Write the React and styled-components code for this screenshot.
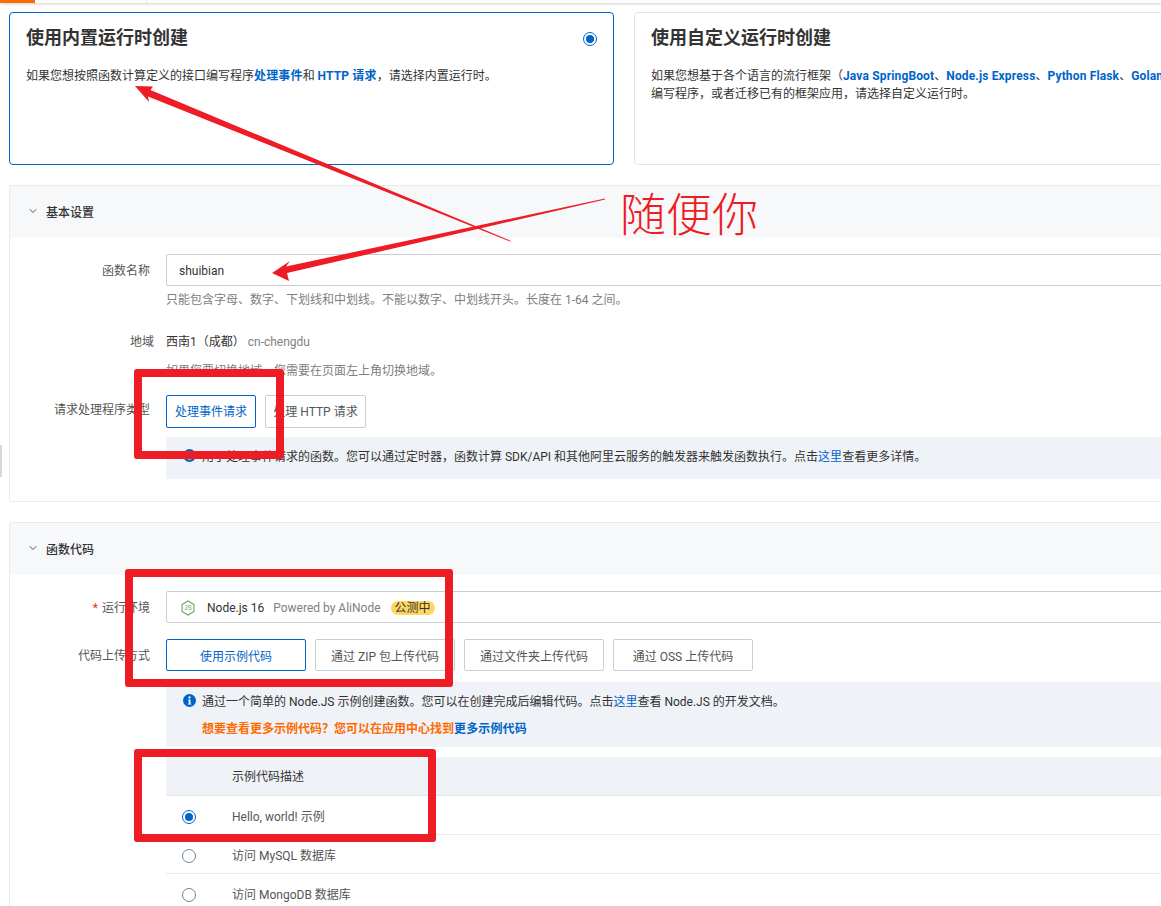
import React from "react";
import styled, { createGlobalStyle, css } from "styled-components";
import { ChevronDown } from "lucide-react";

const GlobalStyle = createGlobalStyle`
  html, body {
    margin: 0;
    padding: 0;
    background: #fff;
    overflow: hidden;
  }
  * {
    box-sizing: border-box;
  }
`;

const Page = styled.div`
  position: relative;
  width: 1161px;
  height: 906px;
  overflow: hidden;
  color: #333;
  font-family: Roboto, "Noto Sans CJK SC", sans-serif;
  font-size: 12px;
`;

const TopBar = styled.div`
  height: 3px;
  display: flex;
  background: #fff;
  box-shadow: 0 1px 3px rgba(0, 0, 0, 0.2);
`;

const TopTab = styled.div`
  width: 35px;
  background: #ff6a00;
`;

const TopDivider = styled.div`
  margin-left: 111px;
  width: 1px;
  background: #e3e5e8;
`;

const SideHandle = styled.div`
  position: absolute;
  left: 0;
  top: 445px;
  width: 2px;
  height: 32px;
  background: #d5d8dc;
`;

const Content = styled.div`
  width: 1400px;
  padding: 9px 0 0 9px;
  display: flex;
  flex-direction: column;
`;

const CardRow = styled.div`
  display: flex;
  gap: 20px;
  margin-bottom: 20px;
`;

const Card = styled.div`
  position: relative;
  width: ${(p) => (p.$wide ? "760px" : "605px")};
  height: 153px;
  padding: 13px 16px;
  border-radius: 4px;
  border: 1px solid ${(p) => (p.$active ? "#0064c8" : "#e3e5e8")};
`;

const CardTitle = styled.div`
  font-size: 18px;
  line-height: 24px;
  font-weight: 700;
  color: #333;
  margin-bottom: 17px;
`;

const CardText = styled.div`
  line-height: 18px;
  white-space: nowrap;
  color: #333;
`;

const Strong = styled.b`
  color: #0064c8;
  font-weight: 700;
  letter-spacing: 0.15px;
`;

const Link = styled.span`
  color: #0064c8;
`;

const CardRadio = styled.div`
  position: absolute;
  right: 16px;
  top: 19px;
`;

const Section = styled.div`
  border: 1px solid #e9ebee;
  border-radius: 2px;
  height: ${(p) => p.$height}px;
  margin-bottom: ${(p) => p.$gap || 0}px;
`;

const SectionHead = styled.div`
  height: 52px;
  padding: 0 0 2px 17px;
  display: flex;
  align-items: center;
  gap: 7px;
  background: #f7f8fa;
  font-weight: 500;
  color: #333;
`;

const SectionBody = styled.div`
  padding-top: ${(p) => p.$top}px;
  display: flex;
  flex-direction: column;
`;

const Row = styled.div`
  display: flex;
  gap: 12px;
  margin-bottom: ${(p) => p.$gap || 0}px;
`;

const Label = styled.div`
  width: 144px;
  flex: none;
  height: ${(p) => p.$height || 32}px;
  line-height: ${(p) => p.$height || 32}px;
  padding: 1px ${(p) => (p.$flush ? 0 : 4)}px 0 0;
  text-align: right;
  color: #555;
  white-space: nowrap;
`;

const Required = styled.span`
  color: #d93026;
  margin-right: 4px;
`;

const Field = styled.div`
  flex: 1;
  min-width: 0;
`;

const InputBox = styled.div`
  height: 32px;
  display: flex;
  align-items: center;
  padding: 2px 0 0 12px;
  border: 1px solid #c9cdd4;
  border-radius: 2px;
  color: #333;
`;

const SelectBox = styled(InputBox)`
  padding-left: 14px;
  gap: 9px;
`;

const IconSlot = styled.span`
  display: flex;
  margin-right: 3px;
`;

const Hint = styled.div`
  margin-top: ${(p) => p.$top}px;
  line-height: 18px;
  color: #808080;
  white-space: nowrap;
`;

const PlainValue = styled.div`
  height: 18px;
  line-height: 18px;
  display: flex;
  gap: 3px;
  color: #333;
`;

const Muted = styled.span`
  color: #808080;
`;

const Badge = styled.span`
  height: 14px;
  line-height: 14px;
  margin-left: 1px;
  padding: 0 4px;
  border-radius: 7px;
  background: #ffd75e;
  color: #333;
`;

const Buttons = styled.div`
  display: flex;
  gap: 9px;
`;

const Toggle = styled.div`
  width: ${(p) => p.$width}px;
  height: ${(p) => p.$height}px;
  padding-bottom: ${(p) => (p.$height === 33 ? 2 : 0)}px;
  display: flex;
  align-items: center;
  justify-content: center;
  white-space: nowrap;
  border-radius: 2px;
  border: 1px solid #c9cdd4;
  color: #555;
  ${(p) =>
    p.$active &&
    css`
      border-color: #0064c8;
      color: #0064c8;
    `}
`;

const InfoBox = styled.div`
  margin-top: ${(p) => p.$top}px;
  min-height: ${(p) => p.$height}px;
  padding: ${(p) => p.$pad}px 0 0 17px;
  background: #eff2f6;
  color: #333;
`;

const InfoLine = styled.div`
  display: flex;
  align-items: center;
  gap: 6px;
  height: 18px;
  white-space: nowrap;
`;

const Promo = styled.div`
  margin: 11px 0 0 19px;
  height: 18px;
  line-height: 18px;
  font-weight: 700;
  color: #ff6a00;
`;

const Table = styled.div`
  margin-top: 10px;
`;

const TableHead = styled.div`
  height: 39px;
  padding: 0 0 2px 66px;
  display: flex;
  align-items: center;
  background: #eff2f6;
  border-bottom: 1px solid #e3e5e8;
  color: #333;
`;

const TableRow = styled.div`
  height: 39px;
  display: flex;
  align-items: center;
  border-bottom: 1px solid #e9ebee;
  color: #555;
`;

const RadioCell = styled.div`
  width: 66px;
  padding-left: 16px;
  margin-top: 4px;
`;

const RadioDot = styled.span`
  display: block;
  width: 14px;
  height: 14px;
  border-radius: 50%;
  border: 1px solid ${(p) => (p.$on ? "#0064c8" : "#6f8298")};
  background: #fff;
  position: relative;
  ${(p) =>
    p.$on &&
    css`
      &::after {
        content: "";
        position: absolute;
        inset: 2px;
        border-radius: 50%;
        background: #0064c8;
      }
    `}
`;

const Annotations = styled.svg`
  position: absolute;
  left: 0;
  top: 0;
  width: 1161px;
  height: 906px;
  pointer-events: none;
`;

const RedBox = styled.div`
  position: absolute;
  left: ${(p) => p.$x}px;
  top: ${(p) => p.$y}px;
  width: ${(p) => p.$w}px;
  height: ${(p) => p.$h}px;
  border: 8px solid #ee1c25;
  border-radius: 3px;
`;

const Scribble = styled.div`
  position: absolute;
  left: 620px;
  top: 184px;
  font-family: "Liberation Serif", "Noto Sans CJK SC", serif;
  font-size: 46px;
  font-weight: 300;
  line-height: 64px;
  color: #ee1c25;
  white-space: nowrap;
`;

const InfoIcon = () => (
  <svg width="13" height="13" viewBox="0 0 13 13">
    <circle cx="6.5" cy="6.5" r="6.5" fill="#0064c8" />
    <circle cx="6.5" cy="3.4" r="1.1" fill="#fff" />
    <path d="M5 5.4h2.5v4.3h.9v.9H4.8v-.9h.9V6.3H5z" fill="#fff" />
  </svg>
);

const NodeIcon = () => (
  <svg width="14" height="16" viewBox="0 0 14 16">
    <path
      d="M7 1l6 3.5v7L7 15l-6-3.5v-7z"
      fill="none"
      stroke="#6da55f"
      strokeWidth="1.1"
    />
    <text x="7" y="10.4" textAnchor="middle" fontSize="6.5" fill="#6da55f" fontFamily="Liberation Sans, sans-serif">
      JS
    </text>
  </svg>
);

const samples = [
  { name: "Hello, world! 示例", on: true },
  { name: "访问 MySQL 数据库" },
  { name: "访问 MongoDB 数据库" },
];

const uploads = [
  { text: "使用示例代码", width: 140, active: true },
  { text: "通过 ZIP 包上传代码", width: 140 },
  { text: "通过文件夹上传代码", width: 140 },
  { text: "通过 OSS 上传代码", width: 140 },
];

export default function App() {
  return (
    <Page>
      <GlobalStyle />
      <TopBar>
        <TopTab />
        <TopDivider />
      </TopBar>
      <SideHandle />
      <Content>
        <CardRow>
          <Card $active>
            <CardTitle>使用内置运行时创建</CardTitle>
            <CardText>
              如果您想按照函数计算定义的接口编写程序<Strong>处理事件</Strong>和 <Strong>HTTP 请求</Strong>，请选择内置运行时。
            </CardText>
            <CardRadio>
              <RadioDot $on />
            </CardRadio>
          </Card>
          <Card $wide>
            <CardTitle>使用自定义运行时创建</CardTitle>
            <CardText>
              如果您想基于各个语言的流行框架（<Strong>Java SpringBoot</Strong>、<Strong>Node.js Express</Strong>、<Strong>Python Flask</Strong>、<Strong>Golang Gin</Strong> 等）
              <br />
              编写程序，或者迁移已有的框架应用，请选择自定义运行时。
            </CardText>
          </Card>
        </CardRow>

        <Section $height={317} $gap={20}>
          <SectionHead>
            <ChevronDown size={12} color="#555" />
            基本设置
          </SectionHead>
          <SectionBody $top={16}>
            <Row $gap={24}>
              <Label>函数名称</Label>
              <Field>
                <InputBox>shuibian</InputBox>
                <Hint $top={5}>只能包含字母、数字、下划线和中划线。不能以数字、中划线开头。长度在 1-64 之间。</Hint>
              </Field>
            </Row>
            <Row $gap={15}>
              <Label $height={17} $flush>地域</Label>
              <Field>
                <PlainValue>
                  西南1（成都）<Muted>cn-chengdu</Muted>
                </PlainValue>
                <Hint $top={11}>如果您要切换地域，您需要在页面左上角切换地域。</Hint>
              </Field>
            </Row>
            <Row>
              <Label $height={29}>请求处理程序类型</Label>
              <Field>
                <Buttons>
                  <Toggle $active $width={90} $height={33}>处理事件请求</Toggle>
                  <Toggle $width={101} $height={33}>处理 HTTP 请求</Toggle>
                </Buttons>
                <InfoBox $top={9} $height={42} $pad={9}>
                  <InfoLine>
                    <InfoIcon />
                    <span>
                      用于处理事件请求的函数。您可以通过定时器，函数计算 SDK/API 和其他阿里云服务的触发器来触发函数执行。点击<Link>这里</Link>查看更多详情。
                    </span>
                  </InfoLine>
                </InfoBox>
              </Field>
            </Row>
          </SectionBody>
        </Section>

        <Section $height={500}>
          <SectionHead>
            <ChevronDown size={12} color="#555" />
            函数代码
          </SectionHead>
          <SectionBody $top={16}>
            <Row $gap={16}>
              <Label>
                <Required>*</Required>运行环境
              </Label>
              <Field>
                <SelectBox>
                  <IconSlot>
                    <NodeIcon />
                  </IconSlot>
                  <span>Node.js 16</span>
                  <Muted>Powered by AliNode</Muted>
                  <Badge>公测中</Badge>
                </SelectBox>
              </Field>
            </Row>
            <Row>
              <Label>代码上传方式</Label>
              <Field>
                <Buttons>
                  {uploads.map((u) => (
                    <Toggle key={u.text} $active={u.active} $width={u.width} $height={32}>
                      {u.text}
                    </Toggle>
                  ))}
                </Buttons>
                <InfoBox $top={11} $height={65} $pad={9}>
                  <InfoLine>
                    <InfoIcon />
                    <span>
                      通过一个简单的 Node.JS 示例创建函数。您可以在创建完成后编辑代码。点击<Link>这里</Link>查看 Node.JS 的开发文档。
                    </span>
                  </InfoLine>
                  <Promo>
                    想要查看更多示例代码？您可以在应用中心找到<Strong>更多示例代码</Strong>
                  </Promo>
                </InfoBox>
                <Table>
                  <TableHead>示例代码描述</TableHead>
                  {samples.map((s) => (
                    <TableRow key={s.name}>
                      <RadioCell>
                        <RadioDot $on={s.on} />
                      </RadioCell>
                      {s.name}
                    </TableRow>
                  ))}
                </Table>
              </Field>
            </Row>
          </SectionBody>
        </Section>
      </Content>

      <RedBox $x={134} $y={369} $w={150} $h={90} />
      <RedBox $x={125} $y={569} $w={328} $h={118} />
      <RedBox $x={134} $y={749} $w={302} $h={93} />
      <Annotations viewBox="0 0 1161 906">
        <polygon
          points="135,86 153,86.5 150.5,90 511,241 511,241.8 148,96.5 149,102"
          fill="#ee1c25"
        />
        <polygon
          points="272,273 290,261 286,266.5 605,198.6 605,199.6 287,273 289,281"
          fill="#ee1c25"
        />
      </Annotations>
      <Scribble>随便你</Scribble>
    </Page>
  );
}
